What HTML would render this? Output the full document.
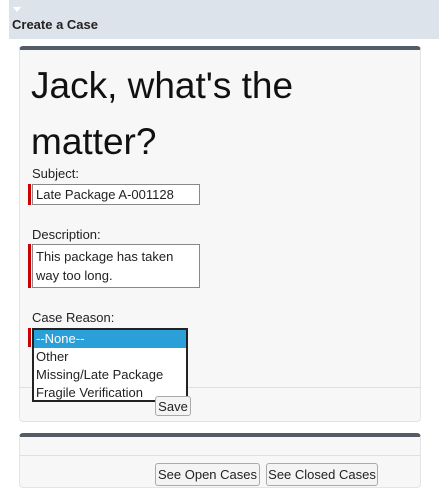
<!DOCTYPE html>
<html><head><style>
*{box-sizing:border-box}
body{margin:0;width:439px;height:503px;background:#fff;font-family:"Liberation Sans",sans-serif;font-size:13px;color:#16325c;position:relative;overflow:hidden}
.a{position:absolute}
.hdr{left:9px;top:0;width:430px;height:39px;background:#dde3ea}
.tri{left:13px;top:7px;width:0;height:0;border-left:4px solid transparent;border-right:4px solid transparent;border-top:5px solid #fff}
.ht{left:12px;top:17px;font-size:13px;font-weight:bold;color:#222}
.panel{background:#f7f7f7;border:1px solid #e4e4e4;border-top:4px solid #545d66;border-radius:4px}
.lbl{color:#222;font-size:13px}
.inp{background:#fff;border:1px solid #888;color:#222;font-size:13px;padding:2px 3px}
.red{background:#c00;width:3px}
.btn{background:#f4f4f4;border:1px solid #aaa;border-radius:3px;font-size:13px;color:#222;text-align:center;line-height:19px}
</style></head><body>
<div class="a hdr"></div>
<div class="a tri"></div>
<div class="a ht">Create a Case</div>

<div class="a panel" style="left:19px;top:46px;width:402px;height:376px"></div>
<div class="a" style="left:31px;top:58px;font-size:37px;line-height:56px;color:#111;width:300px">Jack, what's the matter?</div>
<div class="a lbl" style="left:32px;top:166px">Subject:</div>
<div class="a red" style="left:28px;top:184px;height:21px"></div>
<div class="a inp" style="left:32px;top:184px;width:168px;height:21px">Late Package A-001128</div>
<div class="a lbl" style="left:32px;top:227px">Description:</div>
<div class="a red" style="left:28px;top:244px;height:44px"></div>
<div class="a inp" style="left:32px;top:244px;width:168px;height:44px;line-height:19px">This package has taken way too long.</div>
<div class="a lbl" style="left:32px;top:310px">Case Reason:</div>
<div class="a" style="left:19px;top:387px;width:402px;height:1px;background:#e0e0e0"></div>
<div class="a red" style="left:28px;top:328px;height:19px"></div>
<div class="a" style="left:32px;top:328px;width:156px;height:74px;border:2px solid #222;background:#fff;color:#222;font-size:13px;line-height:18px">
<div style="background:#2a9fd8;color:#fff;padding-left:2px">--None--</div>
<div style="padding-left:2px">Other</div>
<div style="padding-left:2px">Missing/Late Package</div>
<div style="padding-left:2px">Fragile Verification</div>
</div>
<div class="a btn" style="left:155px;top:396px;width:36px;height:20px">Save</div>

<div class="a panel" style="left:19px;top:433px;width:402px;height:55px"></div>
<div class="a" style="left:19px;top:455px;width:402px;height:1px;background:#e0e0e0"></div>
<div class="a btn" style="left:155px;top:463px;width:105px;height:23px;line-height:21px">See Open Cases</div>
<div class="a btn" style="left:266px;top:463px;width:112px;height:23px;line-height:21px">See Closed Cases</div>
</body></html>
